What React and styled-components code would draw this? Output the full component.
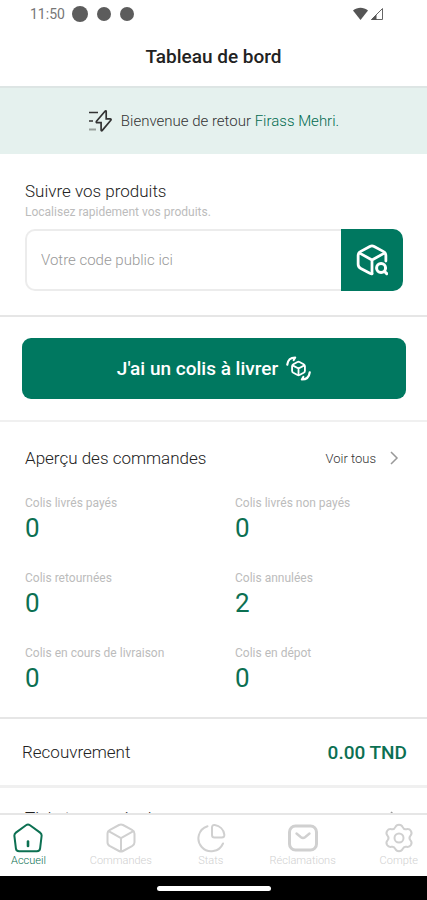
import React from "react";
import styled, { createGlobalStyle } from "styled-components";

const GlobalStyle = createGlobalStyle`
  :root {
    --clr-primary: #007860;
    --clr-number: #0c7052;
    --clr-text: #333;
    --clr-muted: #bcbcbc;
    --clr-line: #e6e6e6;
  }
  * {
    box-sizing: border-box;
  }
  body {
    margin: 0;
    background: #fff;
    color: var(--clr-text);
    font-family: Roboto, "Liberation Sans", sans-serif;
  }
  h1, h2, p, dl, dt, dd {
    margin: 0;
    font-weight: 400;
  }
  button, input {
    font-family: inherit;
  }
  svg {
    display: block;
    flex: none;
  }
`;

const stats = [
  { label: "Colis livrés payés", value: 0 },
  { label: "Colis livrés non payés", value: 0 },
  { label: "Colis retournées", value: 0 },
  { label: "Colis annulées", value: 2 },
  { label: "Colis en cours de livraison", value: 0 },
  { label: "Colis en dépot", value: 0 },
];

const Icon = ({ size = 30, stroke = 2, children, ...rest }) => (
  <svg
    width={size}
    height={size}
    viewBox="0 0 30 30"
    fill="none"
    stroke="currentColor"
    strokeWidth={stroke}
    strokeLinecap="round"
    strokeLinejoin="round"
    aria-hidden="true"
    {...rest}
  >
    {children}
  </svg>
);

const HomeIcon = () => (
  <Icon>
    <path d="M13 2.2 2.9 9.6C1.7 10.5 1.2 11.6 1.4 13l1.5 12.4c.2 1.9 1.3 2.9 3.2 2.9h17.8c1.9 0 3-1 3.2-2.9L28.6 13c.2-1.4-.3-2.5-1.5-3.4L17 2.2c-1.3-.9-2.7-.9-4 0Z" />
    <path d="M15 18.5v4.5" strokeWidth="2.6" />
  </Icon>
);

const BoxIcon = () => (
  <Icon>
    <path d="M13 2 4 6.8C2.4 7.7 1.5 9 1.5 10.8v8.4c0 1.8.9 3.1 2.5 4L13 28c1.3.7 2.7.7 4 0l9-4.8c1.6-.9 2.5-2.2 2.5-4v-8.4c0-1.8-.9-3.1-2.5-4L17 2c-1.3-.7-2.7-.7-4 0Z" />
    <path d="m2.6 8.2 12.4 7 12.4-7M15 15.2V28" />
  </Icon>
);

const ChartIcon = () => (
  <Icon>
    <path d="M11.5 3.2A12.8 12.8 0 1 0 27 20.5" />
    <path d="M16 4.5c0-1.8 1-2.7 2.8-2.4 5 .8 8.8 4.5 9.5 9.4.3 2-.6 3-2.500 3H18.5c-1.7 0-2.5-.8-2.5-2.5Z" />
  </Icon>
);

const MessageIcon = () => (
  <Icon stroke={3}>
    <rect x="1.5" y="3" width="27" height="24" rx="6" />
    <path d="m8.5 10.5 4.5 3.7c1.3 1 2.7 1 4 0l4.500-3.700" strokeWidth="2.4" />
  </Icon>
);

const GearIcon = () => (
  <Icon>
    <circle cx="15" cy="15" r="4.5" />
    <path d="M11.3 4.2C12 2.5 13.2 1.8 15 1.8s3 .7 3.7 2.4c.8 1.8 2 2.4 3.800 2 2-.4 3.400.2 4.400 1.800 1 1.700.9 3.200-.4 4.600-1.400 1.600-1.400 3.200 0 4.800 1.300 1.400 1.400 2.900.4 4.600-1 1.600-2.400 2.200-4.400 1.800-1.800-.4-3 .2-3.800 2-.7 1.700-1.900 2.400-3.700 2.400s-3-.7-3.700-2.400c-.8-1.800-2-2.400-3.800-2-2 .4-3.400-.2-4.400-1.800-1-1.700-.9-3.200.4-4.600 1.400-1.600 1.400-3.200 0-4.800C2.200 11.200 2.100 9.700 3.100 8c1-1.600 2.400-2.200 4.400-1.800 1.800.4 3-.2 3.800-2Z" />
  </Icon>
);

const SearchBoxIcon = () => (
  <Icon size={32}>
    <path d="M15 28c-.8 0-1.4-.2-2-.5l-8.500-4.600c-1.600-.9-2.500-2.200-2.500-4v-8c0-1.800.9-3.100 2.500-4L13 2.300c1.300-.7 2.700-.7 4 0l8.500 4.600c1.600.9 2.500 2.200 2.500 4V16" strokeWidth="2.6" />
    <path d="m3 8.3 12 6.700 12-6.700M15 15v13" strokeWidth="2.6" />
    <circle cx="23.5" cy="22.5" r="4.2" strokeWidth="2.8" />
    <path d="m26.8 25.8 2 2" strokeWidth="2.8" />
  </Icon>
);

const DeliveryIcon = () => (
  <Icon size={25} stroke={2.2}>
    <path d="m13.8 7.2-5 2.7c-1 .6-1.5 1.4-1.5 2.5v5.2c0 1.1.5 1.9 1.5 2.5l5 2.7c.8.4 1.6.4 2.4 0l5-2.7c1-.6 1.5-1.4 1.5-2.5v-5.2c0-1.1-.5-1.9-1.5-2.5l-5-2.7c-.8-.4-1.6-.4-2.4 0Z" />
    <path d="m8.5 11.5 6.5 3.5 6.5-3.5M15 15v7" />
    <path d="M1.5 10.500C2.200 5 6 1.800 11 1.800L9.200 4.800M28.500 19.500c-.7 5.500-4.500 8.700-9.500 8.700l1.800-3" strokeWidth="2.6" />
  </Icon>
);

const BoltIcon = () => (
  <svg width="25" height="24" viewBox="0 0 25 24" fill="none" stroke="#333" strokeWidth="2" aria-hidden="true">
    <path d="M8.5 12.300 17 2.200c.6-.7 1.200-.4 1.200.4v7.300h4c.9 0 1.200.6.6 1.300l-8.500 10.200c-.6.7-1.200.4-1.200-.4v-7.300H9.200c-.9 0-1.300-.6-.7-1.400Z" strokeWidth="1.7" />
    <path d="M1 3.5h9M1 12h4" strokeWidth="1.6" />
    <path d="M1 20.5h7" stroke="#98a09d" />
  </svg>
);

const SignalIcons = () => (
  <svg width="32" height="14" viewBox="0 0 32 14" aria-hidden="true">
    <path d="M0 3.5C4.5-.3 10.5-.3 15 3.5L7.5 13Z" fill="#555" />
    <path d="M29.5 1.5v11h-11Z" fill="none" stroke="#666" />
    <path d="M23.5 7.5V13H18Z" fill="#555" />
  </svg>
);

const Chevron = () => (
  <svg width="10" height="14" viewBox="0 0 10 14" fill="none" stroke="#999" strokeWidth="1.5" aria-hidden="true">
    <path d="m2 1 6 6-6 6" />
  </svg>
);

const tabs = [
  { label: "Accueil", icon: <HomeIcon />, active: true },
  { label: "Commandes", icon: <BoxIcon /> },
  { label: "Stats", icon: <ChartIcon /> },
  { label: "Réclamations", icon: <MessageIcon /> },
  { label: "Compte", icon: <GearIcon /> },
];

const App = () => {
  return (
    <>
      <GlobalStyle />
      <Screen>
        <StatusBar>
          <span>11:50</span>
          <Dot $size={16} />
          <Dot $size={14} />
          <Dot $size={14} />
          <SignalIcons />
        </StatusBar>
        <Header>
          <h1>Tableau de bord</h1>
        </Header>

        <Content>
          <Welcome>
            <BoltIcon />
            <p>
              Bienvenue de retour <strong>Firass Mehri.</strong>
            </p>
          </Welcome>

          <Track>
            <SectionTitle as="label" htmlFor="code">
              Suivre vos produits
            </SectionTitle>
            <Hint>Localisez rapidement vos produits.</Hint>
            <SearchForm onSubmit={(e) => e.preventDefault()}>
              <input id="code" type="text" placeholder="Votre code public ici" />
              <button type="submit" aria-label="Rechercher">
                <SearchBoxIcon />
              </button>
            </SearchForm>
          </Track>

          <Action>
            <DeliverButton type="button">
              J'ai un colis à livrer
              <DeliveryIcon />
            </DeliverButton>
          </Action>

          <Orders>
            <SectionHeader>
              <SectionTitle>Aperçu des commandes</SectionTitle>
              <a href="#commandes">
                Voir tous
                <Chevron />
              </a>
            </SectionHeader>
            <StatGrid>
              {stats.map(({ label, value }) => (
                <div key={label}>
                  <dt>{label}</dt>
                  <dd>{value}</dd>
                </div>
              ))}
            </StatGrid>
          </Orders>

          <Recovery>
            <SectionTitle>Recouvrement</SectionTitle>
            <p>0.00 TND</p>
          </Recovery>

          {/* continues below the tab bar */}
          <Tickets>
            <SectionHeader>
              <SectionTitle>Tickets non résolus</SectionTitle>
              <a href="#tickets" aria-label="Tickets">
                <Chevron />
              </a>
            </SectionHeader>
          </Tickets>
        </Content>

        <TabBar>
          {tabs.map(({ label, icon, active }) => (
            <Tab key={label} href={`#${label}`} $active={active}>
              {icon}
              {label}
            </Tab>
          ))}
        </TabBar>
        <SystemBar>
          <span />
        </SystemBar>
      </Screen>
    </>
  );
};

const Screen = styled.div`
  display: flex;
  flex-direction: column;
  height: 100vh;
  overflow: hidden;
`;

const StatusBar = styled.div`
  display: flex;
  align-items: center;
  gap: 9px;
  flex: none;
  height: 28px;
  padding: 0 42px 0 30px;
  color: #777;
  font-size: 14px;
  span:first-child {
    margin-right: -2px;
  }
  svg {
    margin-left: auto;
  }
`;

const Dot = styled.span`
  width: ${({ $size }) => $size}px;
  height: ${({ $size }) => $size}px;
  border-radius: 50%;
  background: #5c5c5c;
`;

const Header = styled.header`
  display: flex;
  align-items: center;
  justify-content: center;
  flex: none;
  height: 60px;
  padding-bottom: 2px;
  border-bottom: 2px solid #dde5e4;
  h1 {
    color: #222;
    font-size: 19px;
    font-weight: 500;
  }
`;

const Content = styled.main`
  flex: 1;
  min-height: 0;
  overflow: hidden;
`;

const Welcome = styled.section`
  display: flex;
  align-items: center;
  justify-content: center;
  gap: 8px;
  height: 66px;
  background: #e5f1ee;
  p {
    font-size: 15px;
    line-height: 20px;
    font-weight: 300;
    color: #333;
  }
  strong {
    font-weight: 300;
    color: #006b50;
  }
`;

const Track = styled.section`
  display: flex;
  flex-direction: column;
  padding: 25px 24px 24px 25px;
  border-bottom: 2px solid var(--clr-line);
`;

const SectionTitle = styled.h2`
  font-size: 17px;
  line-height: 24px;
  font-weight: 300;
  color: #222;
`;

const Hint = styled.p`
  font-size: 12px;
  line-height: 18px;
  color: var(--clr-muted);
`;

const SearchForm = styled.form`
  display: flex;
  height: 62px;
  margin-top: 8px;
  input {
    flex: 1;
    min-width: 0;
    padding: 0 14px;
    border: 2px solid #ececec;
    border-right: 0;
    border-radius: 10px 0 0 10px;
    background: #fff;
    font-size: 15px;
    font-weight: 300;
    outline: none;
  }
  input::placeholder {
    color: #999;
  }
  button {
    display: flex;
    align-items: center;
    justify-content: center;
    width: 62px;
    padding: 0;
    border: 0;
    border-radius: 0 10px 10px 0;
    background: var(--clr-primary);
    color: #fff;
    cursor: pointer;
  }
`;

const Action = styled.section`
  padding: 21px 21px 21px 22px;
  border-bottom: 2px solid #f0f0f0;
`;

const DeliverButton = styled.button`
  display: flex;
  align-items: center;
  justify-content: center;
  gap: 8px;
  width: 100%;
  height: 61px;
  border: 0;
  border-radius: 9px;
  background: var(--clr-primary);
  color: #fff;
  font-size: 19px;
  font-weight: 500;
  cursor: pointer;
`;

const Orders = styled.section`
  padding: 24px 0 23px;
  border-bottom: 2px solid var(--clr-line);
`;

const SectionHeader = styled.div`
  display: flex;
  align-items: center;
  justify-content: space-between;
  padding: 0 28px 0 25px;
  a {
    display: flex;
    align-items: center;
    gap: 13px;
    color: #333;
    font-size: 13px;
    font-weight: 300;
    text-decoration: none;
  }
`;

const StatGrid = styled.dl`
  display: grid;
  grid-template-columns: 1fr 1fr;
  gap: 25px 42px;
  margin-top: 24px;
  padding: 0 24px 0 25px;
  dt {
    color: var(--clr-muted);
    font-size: 12px;
    line-height: 18px;
    white-space: nowrap;
  }
  dd {
    color: var(--clr-number);
    font-size: 26px;
    line-height: 32px;
    font-weight: 400;
  }
`;

const Recovery = styled.section`
  display: flex;
  align-items: center;
  justify-content: space-between;
  height: 69px;
  padding: 0 20px 0 22px;
  border-bottom: 3px solid #f0f0f0;
  p {
    color: var(--clr-number);
    font-size: 19px;
    font-weight: 500;
  }
`;

const Tickets = styled.section`
  padding: 18px 0;
`;

const TabBar = styled.nav`
  display: flex;
  align-items: center;
  justify-content: space-between;
  flex: none;
  height: 63px;
  padding: 0 9px 0 11px;
  border-top: 2px solid var(--clr-line);
`;

const Tab = styled.a`
  display: flex;
  flex-direction: column;
  align-items: center;
  color: ${({ $active }) => ($active ? "var(--clr-number)" : "#d0d0d0")};
  font-size: 11px;
  line-height: 16px;
  font-weight: 300;
  text-decoration: none;
`;

const SystemBar = styled.div`
  display: flex;
  align-items: center;
  justify-content: center;
  flex: none;
  height: 24px;
  background: #000;
  span {
    width: 114px;
    height: 5px;
    border-radius: 3px;
    background: #fff;
  }
`;

export default App;
